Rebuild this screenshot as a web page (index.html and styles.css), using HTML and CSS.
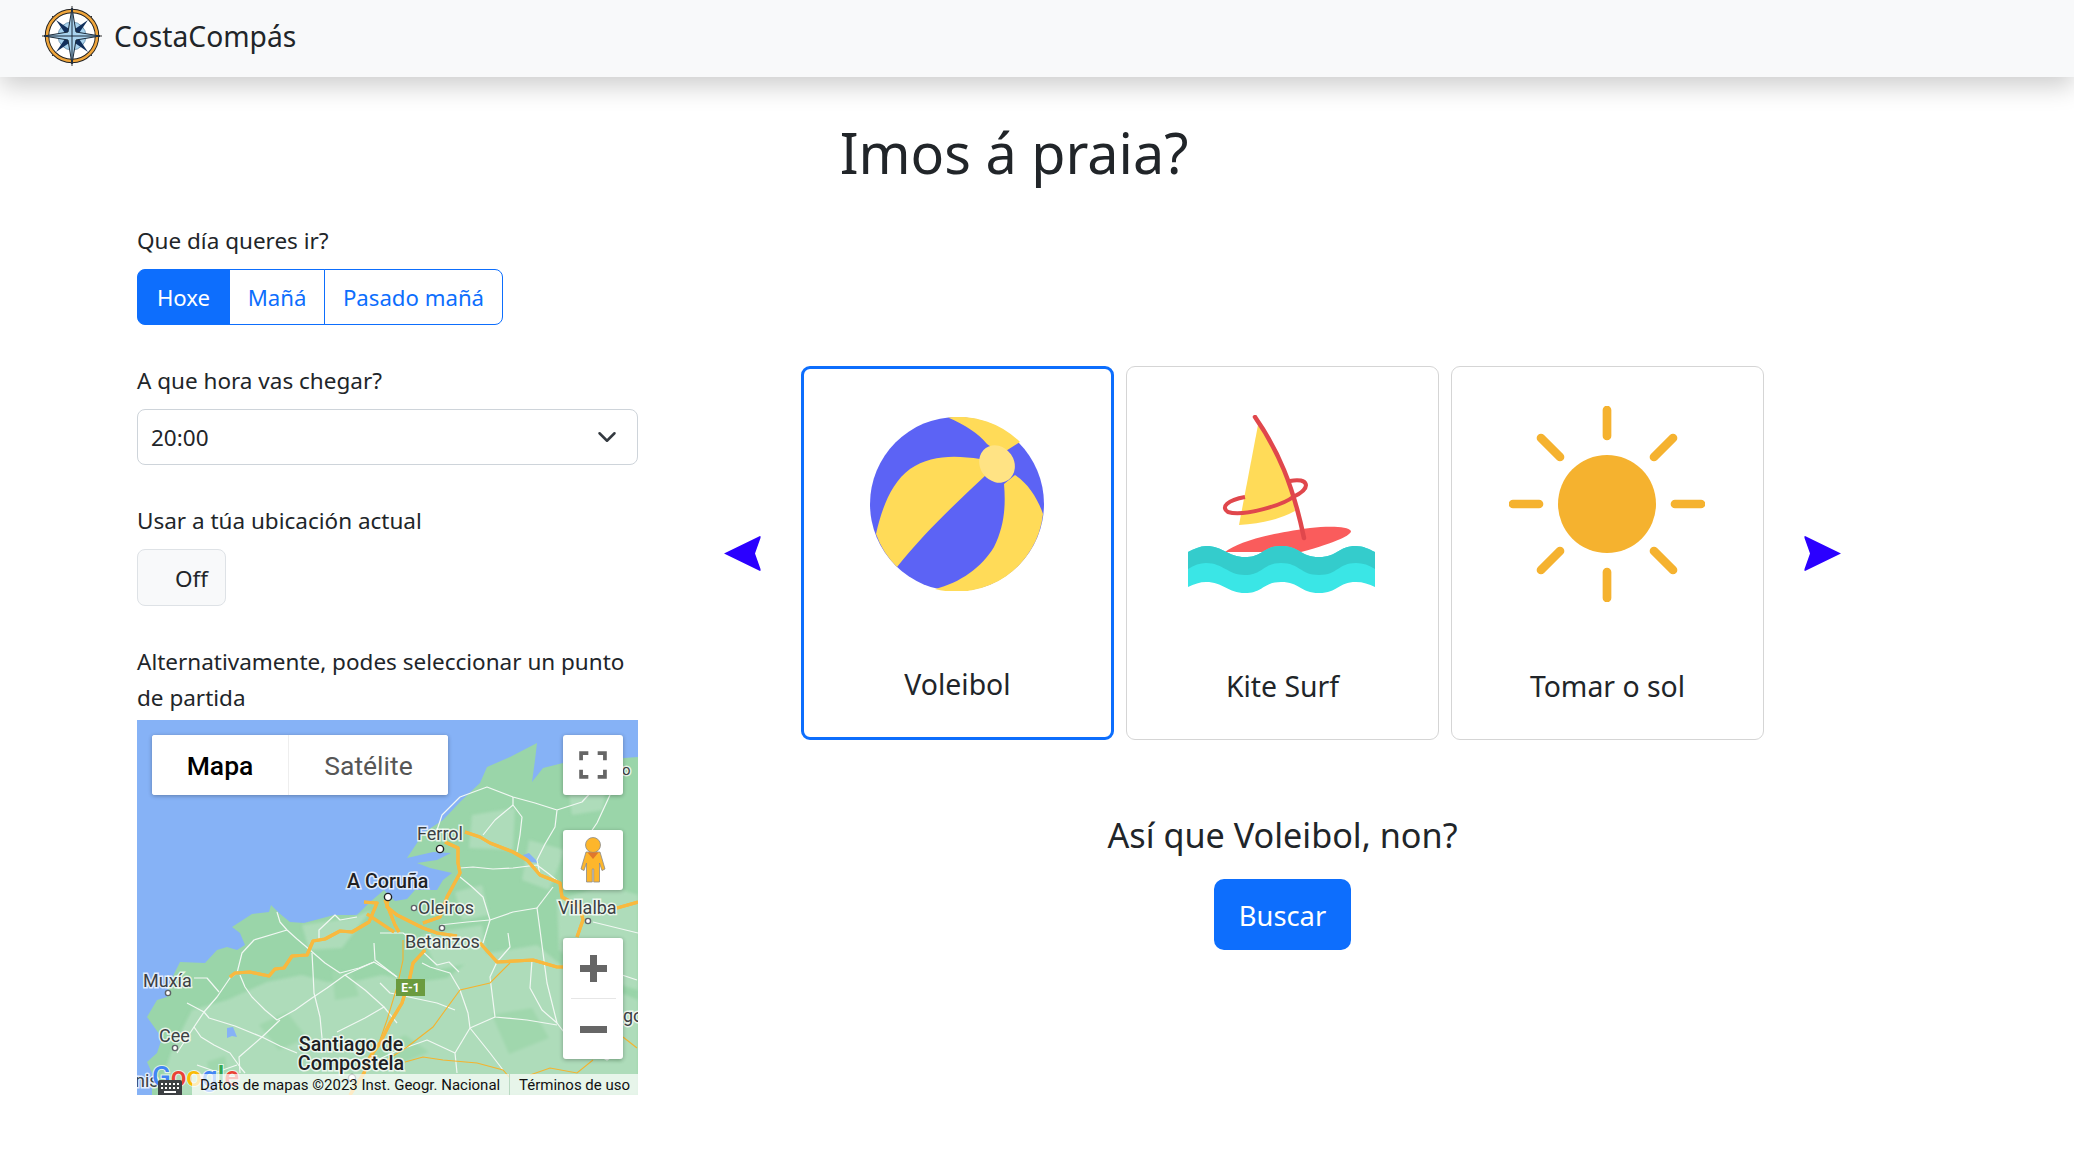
FILE: index.html
```html
<!DOCTYPE html>
<html lang="gl">
<head>
  <meta charset="UTF-8" />
  <meta name="viewport" content="width=device-width, initial-scale=1.0"/>
  <title>CostaCompás</title>
  <link rel="stylesheet" href="styles.css">
</head>
<body>
  <nav class="navbar">
    <svg class="brand-logo" viewBox="0 0 60 60">
      <path d="M30 0V60M0 30H60M10 10L50 50M50 10L10 50" stroke="#333" stroke-width="1"/>
      <circle cx="30" cy="30" r="25" fill="#fff" stroke="#222" stroke-width="4.5"/>
      <circle cx="30" cy="30" r="25" fill="none" stroke="#f0a63c" stroke-width="2.6"/>
      <circle cx="30" cy="30" r="14" fill="#a9d3ee" stroke="#46708f" stroke-width=".6"/>
      <path d="M14 14L30 25L46 14L35 30L46 46L30 35L14 46L25 30Z" fill="#12305c"/>
      <path d="M30 2L34 26L58 30L34 34L30 58L26 34L2 30L26 26Z" fill="#a9d3ee" stroke="#1c2b3a" stroke-width="1"/>
      <path d="M30 2V58M2 30H58" stroke="#1c2b3a" stroke-width="1"/>
    </svg>
    <span class="brand-name">CostaCompás</span>
  </nav>

  <h1>Imos á praia?</h1>

  <main class="layout">
    <section class="filters">
      <div class="field">
        <label class="field-label">Que día queres ir?</label>
        <div class="day-group">
          <button class="day-btn day-active">Hoxe</button>
          <button class="day-btn">Mañá</button>
          <button class="day-btn">Pasado mañá</button>
        </div>
      </div>

      <div class="field">
        <label class="field-label">A que hora vas chegar?</label>
        <div class="select-wrap">
          <select class="hour-select"><option>20:00</option></select>
          <svg class="select-arrow" viewBox="0 0 16 16"><path d="M2 5l6 6 6-6" fill="none" stroke="#343a40" stroke-width="2" stroke-linecap="round" stroke-linejoin="round"/></svg>
        </div>
      </div>

      <div class="field">
        <label class="field-label">Usar a túa ubicación actual</label>
        <button class="toggle-btn">Off</button>
      </div>

      <div class="field field-map">
        <label class="field-label">Alternativamente, podes seleccionar un punto de partida</label>
        <div class="map">
          <svg class="map-canvas" viewBox="0 0 501 375">
            <rect width="501" height="375" fill="#86b2f6"/>
            <path class="land" d="M15 353L10 342L20 333L25 318L10 297L20 280L30 277L33 262L43 242L68 243L80 230L90 227L100 230L108 225L103 213L95 207L115 194L132 192L134 185L142 193L153 202L167 203L197 195L220 195L233 182L247 170L258 181L270 179L278 170L300 170L306 160L315 153L293 148L280 143L300 140L314 133L296 132L270 138L280 123L286 113L306 100L323 82L343 63L350 47L373 37L400 23L398 40L395 62L406 48L426 43L460 40L501 37V375H15Z"/>
            <g class="patches">
              <path class="land-light" d="M55 290L90 280L130 262L165 255L190 262L215 262L245 255L280 262L310 258L340 235L400 225L430 250L501 280V375H20L35 330Z"/>
              <path class="land-light" d="M335 95L378 88L376 130L332 128ZM392 120L428 130L412 170L385 160ZM420 180L470 165L501 175V270L450 255L422 230ZM285 215L345 205L350 240L300 250ZM165 205L215 198L234 190L205 228L172 230ZM430 60L470 55L466 90L435 95ZM318 172L345 165L352 195L325 200Z"/>
              <path class="land-mid" d="M122 305L150 292L170 318L142 330ZM230 335L268 315L292 332L258 346ZM355 295L395 288L412 318L372 334ZM435 315L475 305L485 342L442 338ZM195 250L215 254L222 276L198 280ZM70 342L88 336L90 350L72 352Z"/>
            </g>
            <path class="lake" d="M90 308L96 307L100 317L95 316L90 318ZM386 135L392 133L402 143L393 142Z"/>

            <g class="roads">
              <polyline points="140,192 143,202 150,210 160,219 173,230 188,243 203,253 222,248 237,242"/>
              <polyline points="150,210 117,220 105,233 100,253 93,258 80,277 67,292 57,307 64,317 77,325 93,333 103,347 108,353"/>
              <polyline points="103,255 108,267 115,277 128,290 140,300 158,290 175,278 190,268 208,255 237,242 250,250 260,257"/>
              <polyline points="175,233 176,252 177,273 183,297 185,318"/>
              <polyline points="143,300 125,317 102,337 103,353"/>
              <polyline points="50,283 67,292 72,298 98,306 125,317 143,326 160,333"/>
              <polyline points="208,255 228,270 247,287 228,298 210,307 200,312"/>
              <polyline points="57,258 70,258 82,272"/>
              <polyline points="57,307 40,333"/>
              <polyline points="182,220 182,210 198,195 203,200 220,197"/>
              <polyline points="237,223 238,240 260,257"/>
              <polyline points="247,287 260,303"/>
              <polyline points="243,213 266,213 276,220"/>
              <polyline points="323,77 350,67 376,77 398,83 420,90 418,107 408,124 400,140 403,155"/>
              <polyline points="376,77 376,85 385,97 383,115 380,132"/>
              <polyline points="376,85 358,100 346,115"/>
              <polyline points="323,148 336,147 356,149 376,148 400,145 412,154 423,163"/>
              <polyline points="323,157 334,166 346,177 353,200 346,223"/>
              <polyline points="353,200 376,192 400,188 403,210 406,233 410,263 420,303 433,320"/>
              <polyline points="400,188 416,167"/>
              <polyline points="303,205 330,202 353,200"/>
              <polyline points="456,202 501,213"/>
              <polyline points="371,213 373,227 360,242 353,257 358,297 390,300 420,305"/>
              <polyline points="323,270 331,293 333,308 353,333 366,350"/>
              <polyline points="323,270 313,253 293,247 285,243"/>
              <polyline points="333,308 318,333 320,353"/>
              <polyline points="358,297 333,308"/>
              <polyline points="473,75 460,103 445,125"/>
              <polyline points="243,263 253,273 300,283 318,290"/>
              <polyline points="433,320 470,340 478,335"/>
              <polyline points="323,77 305,95 300,110"/>
              <polyline points="286,232 300,245 312,242 322,252"/>
              <polyline points="420,90 445,82 470,55"/>
              <polyline points="395,240 393,268 405,290 420,303"/>
              <polyline points="500,260 470,250 450,262 442,290"/>
              <polyline points="210,340 240,340 262,330 290,320 318,333"/>
              <polyline points="60,345 80,352 100,345"/>
            </g>
            <g class="roads-thin">
              <polyline points="266,220 266,240 260,267 250,300 243,320"/>
              <polyline points="373,243 353,263 323,270 296,307 270,327 250,340"/>
              <polyline points="268,342 286,337 306,340 340,343 366,350 373,358"/>
              <polyline points="393,355 413,348 440,353 456,340"/>
              <polyline points="486,317 500,328"/>
            </g>
            <g class="highway" id="highways">
              <polyline points="93,257 98,253 113,252 132,256 138,249 147,248 155,236 170,235 176,221 188,219 203,211 215,212 232,202 240,183 227,182"/>
              <polyline points="230,194 257,212"/>
              <polyline points="251,177 250,187 260,195 286,208 300,213 320,216"/>
              <polyline points="248,180 258,205 262,212"/>
              <polyline points="328,112 343,117 353,123 376,132 390,140 403,155 423,163 425,177 443,187 446,200 440,217"/>
              <polyline points="480,188 501,182"/>
              <polyline points="308,122 321,128 321,143 323,153 310,177 303,197 286,203"/>
              <polyline points="288,230 276,243 273,257 265,283 253,303 243,323 233,337 227,353 213,375"/>
              <polyline points="343,223 360,242 396,240 420,247 426,247"/>
            </g>
            <use class="highway-core" href="#highways"/>

            <g class="map-dots">
              <circle class="dot-big" cx="303" cy="129" r="3.6"/>
              <circle class="dot-big" cx="251" cy="177" r="3.6"/>
              <circle cx="277" cy="188" r="2.6"/>
              <circle cx="305" cy="208" r="2.6"/>
              <circle cx="451" cy="201" r="2.6"/>
              <circle cx="31" cy="273" r="2.6"/>
              <circle cx="38" cy="328" r="2.6"/>
              <circle cx="215" cy="358" r="3.6"/>
            </g>

            <rect x="259" y="259" width="29" height="17" fill="#6b9b3f"/>
            <text class="shield" x="273.500" y="272">E-1</text>

            <text class="place" x="280" y="120">Ferrol</text>
            <text class="place place-strong" x="210" y="168">A Coruña</text>
            <text class="place" x="281" y="194">Oleiros</text>
            <text class="place" x="268" y="228">Betanzos</text>
            <text class="place" x="421" y="194">Villalba</text>
            <text class="place" x="6" y="267">Muxía</text>
            <text class="place" x="22" y="322">Cee</text>
            <text class="place place-strong" x="214" y="331" text-anchor="middle">Santiago de</text>
            <text class="place place-strong" x="214" y="350" text-anchor="middle">Compostela</text>
            <text class="place" x="486" y="302">go</text>
            <text class="place place-small" x="480" y="55">ro</text>
            <text class="place" x="-2" y="367">nis</text>

            <text class="google-logo" x="15" y="366"><tspan fill="#4285f4">G</tspan><tspan fill="#ea4335">o</tspan><tspan fill="#fbbc05">o</tspan><tspan fill="#4285f4">g</tspan><tspan fill="#34a853">l</tspan><tspan fill="#ea4335">e</tspan></text>
          </svg>

          <div class="map-attrib">
            <span class="attrib-text">Datos de mapas ©2023 Inst. Geogr. Nacional</span>
            <span class="attrib-terms">Términos de uso</span>
          </div>

          <svg class="map-keyboard" viewBox="0 0 24 15">
            <path d="M2 0H22Q24 0 24 2V15H0V2Q0 0 2 0Z" fill="#3c4043"/>
            <path d="M3 3h2v2H3zM7 3h2v2H7zM11 3h2v2h-2zM15 3h2v2h-2zM19 3h2v2h-2zM3 7h2v2H3zM7 7h2v2H7zM11 7h2v2h-2zM15 7h2v2h-2zM19 7h2v2h-2zM6 11h12v2H6z" fill="#fff"/>
          </svg>

          <div class="map-types">
            <button class="map-type map-type-on">Mapa</button>
            <button class="map-type">Satélite</button>
          </div>

          <button class="map-btn map-fullscreen">
            <svg viewBox="0 0 27 27"><path d="M2 9V2H9M18 2H25V9M25 18V25H18M9 25H2V18" fill="none" stroke="#666" stroke-width="3.600"/></svg>
          </button>

          <button class="map-btn map-pegman">
            <svg viewBox="0 0 26 46">
              <path d="M6 15H20L25 32L22 33.500L19.500 26V45H13.700V32H12.300V45H6.500V26L4 33.500L1 32Z" fill="#fdb62b" stroke="#8a8a8a" stroke-width=".8"/>
              <circle cx="13" cy="8" r="7.500" fill="#fdb62b" stroke="#8a8a8a" stroke-width=".8"/>
              <path d="M7.500 15.500H18.500L13 22Z" fill="#e0772c"/>
            </svg>
          </button>

          <div class="map-zoom">
            <button class="zoom-btn">
              <svg viewBox="0 0 27 27"><path d="M13.500 0V27M0 13.500H27" stroke="#666" stroke-width="7"/></svg>
            </button>
            <div class="zoom-divider"></div>
            <button class="zoom-btn">
              <svg viewBox="0 0 27 27"><path d="M0 13.500H27" stroke="#666" stroke-width="7"/></svg>
            </button>
          </div>
        </div>
      </div>
    </section>

    <section class="picker">
      <div class="carousel">
        <svg class="arrow" viewBox="0 0 37 37"><path d="M0 18.500L36 1Q37 1 36.500 3L31 18.500L36.500 34Q37 36 36 36Z" fill="#2b00ff"/></svg>

        <div class="card card-selected">
          <div class="card-icon">
            <svg class="ball" viewBox="0 0 174 174">
              <circle cx="87" cy="87" r="87" fill="#5c63f5"/>
              <path d="M78 .5C95 8 108 16 117 27L131 37L150 25A87 87 0 0 0 78 .5Z" fill="#ffdb58"/>
              <path d="M6 117C12 90 22 65 40 52C60 38 85 38 110 42L117 57C85 87 55 115 27 150A87 87 0 0 1 6 117Z" fill="#ffdb58"/>
              <path d="M145 58C158 66 168 82 173 97A87 87 0 0 1 65 172C90 166 112 150 124 130C134 110 136 90 134 67Z" fill="#ffdb58"/>
              <ellipse cx="127" cy="47" rx="17" ry="19.500" transform="rotate(-35 127 47)" fill="#ffe384"/>
            </svg>
          </div>
          <div class="card-label">Voleibol</div>
        </div>

        <div class="card">
          <div class="card-icon">
            <svg class="kite" viewBox="0 0 187 179">
              <path d="M70 10L51 110Q85 108 107 96Q102 55 70 10Z" fill="#ffdb58"/>
              <path d="M37 137C50 128 72 120 122 113C140 111 160 111 163 116C163 120 150 127 113 137Z" fill="#fa5c5c"/>
              <path d="M67 2C90 35 105 70 116 123" fill="none" stroke="#e0474c" stroke-width="4.500" stroke-linecap="round"/>
              <path d="M57 82C40 85 32 92 40 97C55 102 95 90 105 82C125 73 120 62 102 66" fill="none" stroke="#e0474c" stroke-width="4"/>
              <path d="M0 137C6 134 12 131 18 131C35 131 40 142 57 142C75 142 75 131 93 131C112 131 112 142 131 142C150 142 150 131 168 131C175 131 181 134 187 137V172C181 169 175 167 168 167C150 167 150 178 131 178C112 178 112 167 93 167C75 167 75 178 57 178C40 178 35 167 18 167C12 167 6 169 0 172Z" fill="#3ae6e6"/>
              <path d="M0 137C6 134 12 131 18 131C35 131 40 142 57 142C75 142 75 131 93 131C112 131 112 142 131 142C150 142 150 131 168 131C175 131 181 134 187 137V154C181 150 175 148 168 148C150 148 150 160 131 160C112 160 112 148 93 148C75 148 75 160 57 160C40 160 35 148 18 148C12 148 6 150 0 154Z" fill="#34cccc"/>
            </svg>
          </div>
          <div class="card-label">Kite Surf</div>
        </div>

        <div class="card">
          <div class="card-icon">
            <svg class="sun" viewBox="-98 -98 196 196">
              <circle r="49" fill="#f5b22f"/>
              <path d="M0-94V-68M0 94V68M-94 0H-68M94 0H68M-66-66L-47-47M66-66L47-47M-66 66L-47 47M66 66L47 47" stroke="#f5b22f" stroke-width="8.700" stroke-linecap="round"/>
            </svg>
          </div>
          <div class="card-label">Tomar o sol</div>
        </div>

        <svg class="arrow" viewBox="0 0 37 37"><path d="M37 18.500L1 1Q0 1 .5 3L6 18.500L.5 34Q0 36 1 36Z" fill="#2b00ff"/></svg>
      </div>

      <h2>Así que Voleibol, non?</h2>
      <button class="search-btn">Buscar</button>
    </section>
  </main>
</body>
</html>
```

FILE: styles.css
```css
* {
  box-sizing: border-box;
}

body {
  margin: 0;
  font-family: "Noto Sans", sans-serif;
  font-size: 22.5px;
  line-height: 36px;
  color: #212529;
  background-color: #fff;
}

button, select {
  font-family: inherit;
}

.navbar {
  display: flex;
  align-items: center;
  height: 77px;
  padding-left: 42px;
  background-color: #f8f9fa;
  box-shadow: 0 9px 24px rgba(0, 0, 0, 0.2);
}

.brand-logo {
  width: 60px;
  height: 60px;
  margin-top: -6px;
}

.brand-name {
  margin-top: -5px;
  margin-left: 12px;
  font-size: 28.200px;
}

h1 {
  margin: 0;
  padding: 37px 46px 0 0;
  font-size: 55.700px;
  font-weight: 400;
  line-height: 76px;
  text-align: center;
}

.layout {
  display: flex;
  padding: 33px 147px 0 137px;
}

/* left column */
.filters {
  flex: 0 0 501px;
  width: 501px;
}

.field {
  margin-bottom: 38px;
}

.field-label {
  display: block;
  margin-bottom: 10px;
}

.field-map {
  margin-bottom: 0;
}

.field-map .field-label {
  margin-bottom: 4px;
}

.day-group {
  display: flex;
  width: 366px;
  height: 56px;
}

.day-btn {
  height: 100%;
  margin-left: -1px;
  padding: 1px 0 0;
  flex: 96px 0 0;
  font-size: 22.200px;
  color: #0d6efd;
  background-color: #fff;
  border: 1.5px solid #0d6efd;
}

.day-btn:first-child {
  margin-left: 0;
  flex-basis: 93px;
  border-radius: 8px 0 0 8px;
}

.day-btn:last-child {
  flex: 1;
  border-radius: 0 8px 8px 0;
}

.day-active {
  color: #fff;
  background-color: #0d6efd;
}

.select-wrap {
  position: relative;
}

.hour-select {
  display: block;
  width: 100%;
  height: 56px;
  padding: 0 13px;
  font-size: 22.500px;
  color: #212529;
  background-color: #fff;
  border: 1px solid #ced4da;
  border-radius: 8px;
  appearance: none;
}

.select-arrow {
  position: absolute;
  top: 18px;
  right: 21px;
  width: 20px;
  height: 20px;
  pointer-events: none;
}

.toggle-btn {
  display: block;
  width: 89px;
  height: 57px;
  padding: 2px 0 0 37px;
  font-size: 22.500px;
  color: #212529;
  text-align: left;
  background-color: #f8f9fa;
  border: 1px solid #dee2e6;
  border-radius: 8px;
}

/* map */
.map {
  position: relative;
  width: 501px;
  height: 375px;
  overflow: hidden;
  font-family: Roboto, sans-serif;
}

.map-canvas {
  display: block;
  width: 501px;
  height: 375px;
}

.land {
  fill: #9ad5a9;
}

.patches {
  filter: blur(1.5px);
}

.land-light {
  fill: #aedcba;
}

.land-mid {
  fill: #a0d7ad;
}

.lake {
  fill: #86b2f6;
}

.roads polyline {
  fill: none;
  stroke: #f1f8f3;
  stroke-width: 1.2;
  stroke-linejoin: round;
}

.roads-thin polyline {
  fill: none;
  stroke: #f5b32e;
  stroke-width: 1.1;
}

.highway,
.highway-core {
  fill: none;
  stroke-linejoin: round;
}

.highway {
  stroke: #f8b93f;
  stroke-width: 3.2;
}

.highway-core {
  stroke: #fde9b0;
  stroke-width: 1.3;
}

.map-dots circle {
  fill: #fff;
  stroke: #5f6368;
  stroke-width: 1.4;
}

.map-dots .dot-big {
  stroke: #202124;
}

.shield {
  font-size: 12px;
  font-weight: 700;
  fill: #fff;
  text-anchor: middle;
}

.place {
  font-size: 18px;
  fill: #3c4043;
  stroke: rgba(255, 255, 255, 0.75);
  stroke-width: 3px;
  paint-order: stroke;
}

.place-strong {
  font-size: 19.700px;
  font-weight: 500;
  fill: #202124;
}

.place-small {
  font-size: 15px;
}

.google-logo {
  font-size: 27.500px;
  font-weight: 500;
  stroke: rgba(255, 255, 255, 0.7);
  stroke-width: 2px;
  paint-order: stroke;
}

.map-attrib {
  position: absolute;
  right: 0;
  bottom: 0;
  left: 55px;
  display: flex;
  height: 21px;
  padding-left: 8px;
  font-size: 15px;
  line-height: 23px;
  color: #111;
  background-color: rgba(255, 255, 255, 0.7);
}

.attrib-text {
  width: 309px;
  white-space: nowrap;
}

.attrib-terms {
  padding-left: 9px;
  white-space: nowrap;
  border-left: 1px solid #b9d9c2;
}

.map-keyboard {
  position: absolute;
  bottom: 0;
  left: 21px;
  width: 24px;
  height: 15px;
}

.map-types {
  position: absolute;
  top: 15px;
  left: 15px;
  display: flex;
  width: 296px;
  height: 60px;
  overflow: hidden;
  background-color: #fff;
  border-radius: 3px;
  box-shadow: 0 1px 4px rgba(0, 0, 0, 0.3);
}

.map-type {
  flex: 1;
  padding: 0;
  font-family: Roboto, sans-serif;
  font-size: 26.500px;
  color: #565656;
  background-color: #fff;
  border: none;
}

.map-type-on {
  flex: 0 0 137px;
  font-weight: 500;
  color: #000;
  border-right: 1px solid #eee;
}

.map-btn {
  position: absolute;
  left: 426px;
  display: flex;
  align-items: center;
  justify-content: center;
  width: 60px;
  height: 60px;
  padding: 0;
  background-color: #fff;
  border: none;
  border-radius: 3px;
  box-shadow: 0 1px 4px rgba(0, 0, 0, 0.3);
}

.map-fullscreen {
  top: 15px;
}

.map-fullscreen svg {
  width: 28px;
  height: 28px;
}

.map-pegman {
  top: 110px;
}

.map-pegman svg {
  width: 26px;
  height: 46px;
}

.map-zoom {
  position: absolute;
  top: 218px;
  left: 426px;
  width: 60px;
  height: 121px;
  background-color: #fff;
  border-radius: 3px;
  box-shadow: 0 1px 4px rgba(0, 0, 0, 0.3);
}

.zoom-btn {
  display: flex;
  align-items: center;
  justify-content: center;
  width: 60px;
  height: 60px;
  padding: 0;
  background: none;
  border: none;
}

.zoom-btn svg {
  width: 27px;
  height: 27px;
}

.zoom-divider {
  width: 45px;
  height: 1px;
  margin: 0 auto;
  background-color: #e6e6e6;
}

/* right column */
.picker {
  flex: 1;
  display: flex;
  flex-direction: column;
  align-items: center;
  padding-top: 143px;
}

.carousel {
  display: flex;
  align-items: center;
  gap: 12px;
}

.arrow {
  width: 37px;
  height: 37px;
}

.arrow:first-child {
  margin-right: 28px;
}

.arrow:last-child {
  margin-left: 28px;
}

.card {
  display: flex;
  flex-direction: column;
  align-items: center;
  width: 313px;
  height: 374px;
  padding-top: 39px;
  background-color: #fff;
  border: 1px solid #d5d5d5;
  border-radius: 9px;
}

.card-icon {
  display: flex;
  align-items: center;
  justify-content: center;
  height: 196px;
  padding-right: 2px;
}

.card-label {
  margin-top: 66px;
  font-size: 28.400px;
}

.card-selected {
  padding-top: 37px;
  border: 3px solid #0d6efd;
}

.card-selected .card-label {
  margin-top: 64px;
}

.ball {
  width: 174px;
  height: 174px;
}

.kite {
  width: 187px;
  height: 179px;
}

.sun {
  width: 196px;
  height: 196px;
}

h2 {
  margin: 73px 0 0;
  font-size: 34.200px;
  font-weight: 400;
  line-height: 44px;
}

.search-btn {
  width: 137px;
  height: 71px;
  margin-top: 22px;
  padding: 1px 0 0;
  font-size: 27.300px;
  color: #fff;
  background-color: #0d6efd;
  border: none;
  border-radius: 10px;
}
```
